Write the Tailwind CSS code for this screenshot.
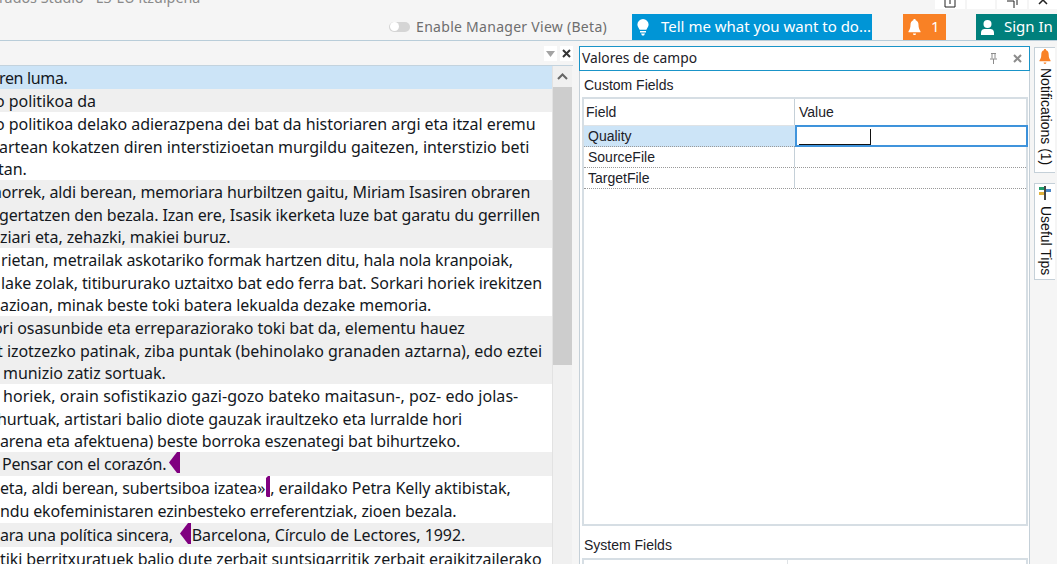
<!DOCTYPE html>
<html lang="en">
<head>
<meta charset="UTF-8">
<title>Trados Studio</title>
<script src="https://cdn.jsdelivr.net/npm/@tailwindcss/browser@4"></script>
</head>
<body class="w-[1057px] h-[564px] overflow-hidden bg-[#f5f5f5] font-['Noto_Sans',sans-serif]">

<!-- title + toolbar -->
<header class="h-[41px] border-b border-[#b9cdd9] overflow-hidden">
  <div class="h-[14px] flex justify-between">
    <div class="-mt-[12px] text-[14.300px] leading-[20px] text-[#8a8a8a] whitespace-nowrap -ml-[1px]">rados Studio - E3-EU itzulpena</div>
    <div class="flex gap-[2px] -mt-[5px] h-[14px]">
      <div class="w-[30px] h-[14px] bg-white flex justify-center items-end"><svg width="12" height="14" viewBox="0 0 12 14"><path d="M1 3h10v9H1zM6 3v6" fill="none" stroke="#222"/></svg></div>
      <div class="w-[28px] h-[14px] bg-white"></div>
      <div class="w-[30px] h-[14px] bg-white flex justify-center"><svg width="12" height="14" viewBox="0 0 12 14"><path d="M3 3h8v7M1 6h7v7" fill="none" stroke="#222"/></svg></div>
      <div class="w-[28px] h-[14px] bg-white flex justify-center"><svg width="10" height="14" viewBox="0 0 10 14"><path d="M1 1l8 8M9 1l-8 8" stroke="#222" stroke-width="1.500"/></svg></div>
    </div>
  </div>
  <div class="h-[26px] flex items-stretch justify-end">
    <div class="flex items-center mr-[25px] -mt-[1px]">
      <div class="w-[21px] h-[10px] rounded-full bg-[#d5d5d5] mr-[6px] flex items-center"><div class="w-[9px] h-[9px] rounded-full bg-white ml-[1px]"></div></div>
      <span class="text-[14px] tracking-[0.28px] text-[#6e6e6e]">Enable Manager View (Beta)</span>
    </div>
    <div class="w-[240px] bg-[#0095d6] text-white flex items-center pl-[5px] mr-[31px]">
      <svg width="12" height="17" viewBox="0 0 12 17" class="mr-[12px]"><path d="M6 0a5.600 5.600 0 0 0-5.600 5.600c0 2.300 1.500 3.400 2.200 5.200h6.800c.7-1.800 2.200-2.900 2.200-5.200A5.600 5.600 0 0 0 6 0zM3 12h6v1.500H3zM4 14.500h4L7 16.500H5z" fill="#fff"/></svg>
      <span class="text-[15px] -mt-[1px] whitespace-nowrap">Tell me what you want to do...</span>
    </div>
    <div class="w-[43px] bg-[#f98125] text-white flex items-center pl-[5px] mr-[30px]">
      <svg width="13" height="16" viewBox="0 0 13 16" class="mr-[10px]"><path d="M6.500 0c.8 0 1.200.5 1.200 1.200 2 .6 2.800 2.400 2.800 4.600 0 3 .8 5 2 6.400v1H.5v-1c1.200-1.400 2-3.400 2-6.400 0-2.200.8-4 2.800-4.600C5.300.5 5.700 0 6.500 0zM5 14.500h3c0 1-.6 1.500-1.500 1.500S5 15.500 5 14.500z" fill="#fff"/></svg>
      <span class="text-[15px] -mt-[1px]">1</span>
    </div>
    <div class="w-[81px] bg-[#00807c] text-white flex items-center pl-[5px]">
      <svg width="13" height="15" viewBox="0 0 13 15" class="mr-[10px]"><circle cx="6.500" cy="4" r="4" fill="#fff"/><path d="M0 15v-2.500C0 10 2 9 3.500 9h6c1.500 0 3.500 1 3.500 3.500V15z" fill="#fff"/></svg>
      <span class="text-[15px] -mt-[1px] whitespace-nowrap">Sign In</span>
    </div>
  </div>
</header>

<main class="flex h-[523px] overflow-hidden">

  <!-- editor pane -->
  <section class="w-[573px] shrink-0 flex flex-col">
    <div class="h-[25px] border-b border-[#c3d3de] flex justify-end items-start gap-[3px] pt-[5px] shrink-0">
      <div class="w-[13px] h-[15px] bg-white flex items-center justify-center"><svg width="9" height="6" viewBox="0 0 9 6"><path d="M0 0h9L4.500 6z" fill="#a3a3a3"/></svg></div>
      <div class="w-[13px] h-[15px] bg-white flex items-center justify-center"><svg width="9" height="9" viewBox="0 0 9 9"><path d="M1 1l7 7M8 1l-7 7" stroke="#333" stroke-width="2"/></svg></div>
    </div>
    <div class="flex flex-1 min-h-0">
      <div class="w-[553px] shrink-0 border-r border-[#e2e2e2] overflow-hidden text-[16px] tracking-[-0.05px] leading-[22.670px] text-[#14181d] whitespace-nowrap [&>div]:pt-[1px]">
        <div class="bg-[#cce4f7] h-[23px]"><div class="-ml-[1px] tracking-[-0.35px]">ren luma.</div></div>
        <div class="bg-[#efefef] h-[23px]"><div class="-ml-[5px]">o politikoa da</div></div>
        <div class="bg-white h-[68px]">
          <div class="-ml-[5px]">o politikoa delako adierazpena dei bat da historiaren argi eta itzal eremu</div>
          <div class="-ml-[1px]">artean kokatzen diren interstizioetan murgildu gaitezen, interstizio beti</div>
          <div class="-ml-[2px]">tan.</div>
        </div>
        <div class="bg-[#efefef] h-[68px]">
          <div class="-ml-[8px] tracking-[-0.13px]">horrek, aldi berean, memoriara hurbiltzen gaitu, Miriam Isasiren obraren</div>
          <div class="-ml-[1px] tracking-[-0.13px]">gertatzen den bezala. Izan ere, Isasik ikerketa luze bat garatu du gerrillen</div>
          <div class="tracking-[-0.1px]">ziari eta, zehazki, makiei buruz.</div>
        </div>
        <div class="bg-white h-[68px]">
          <div class="ml-[1px] tracking-[-0.13px]">rietan, metrailak askotariko formak hartzen ditu, hala nola kranpoiak,</div>
          <div class="ml-[1px] tracking-[-0.1px]">lake zolak, titibururako uztaitxo bat edo ferra bat. Sorkari horiek irekitzen</div>
          <div class="tracking-[-0.09px]">azioan, minak beste toki batera lekualda dezake memoria.</div>
        </div>
        <div class="bg-[#efefef] h-[68px]">
          <div class="-ml-[7px] tracking-[-0.08px]">ori osasunbide eta erreparaziorako toki bat da, elementu hauez</div>
          <div class="-ml-[3px] tracking-[-0.03px]">t izotzezko patinak, ziba puntak (behinolako granaden aztarna), edo eztei</div>
          <div class="ml-[3px]">munizio zatiz sortuak.</div>
        </div>
        <div class="bg-white h-[68px]">
          <div class="ml-[3px] tracking-[0.05px]">horiek, orain sofistikazio gazi-gozo bateko maitasun-, poz- edo jolas-</div>
          <div class="-ml-[3px] tracking-[-0.1px]">hurtuak, artistari balio diote gauzak iraultzeko eta lurralde hori</div>
          <div class="tracking-[-0.13px]">arena eta afektuena) beste borroka eszenategi bat bihurtzeko.</div>
        </div>
        <div class="bg-[#efefef] h-[24px]">
          <div class="ml-[2px] flex items-start"><span class="tracking-[-0.2px]">Pensar con el corazón.</span><svg width="11" height="21" viewBox="0 0 11 21" class="ml-[3px] -mt-[1px] shrink-0"><path d="M11 0v21H8L0 10.500 8 0z" fill="#800080"/></svg></div>
        </div>
        <div class="bg-white h-[47px]">
          <div class="flex items-start"><span class="tracking-[-0.15px]">eta, aldi berean, subertsiboa izatea»</span><svg width="4" height="21" viewBox="0 0 4 21" class="shrink-0 ml-[1px] -mt-[1px]"><path d="M0 2l2-2h2v21H1l-1-1z" fill="#800080"/></svg><span>, eraildako Petra Kelly aktibistak,</span></div>
          <div class="tracking-[-0.15px]">ndu ekofeministaren ezinbesteko erreferentziak, zioen bezala.</div>
        </div>
        <div class="bg-[#efefef] h-[24px]">
          <div class="flex items-start"><span class="whitespace-pre tracking-[-0.2px]">ara una política sincera, </span><svg width="11" height="21" viewBox="0 0 11 21" class="shrink-0 ml-[3px] mr-[1px] -mt-[1px]"><path d="M11 0v21H8L0 10.500 8 0z" fill="#800080"/></svg><span>Barcelona, Círculo de Lectores, 1992.</span></div>
        </div>
        <div class="bg-white h-[24px]"><div class="tracking-[-0.1px]">tiki berritxuratuek balio dute zerbait suntsigarritik zerbait eraikitzailerako</div></div>
      </div>
      <!-- scrollbar -->
      <div class="w-[19px] shrink-0 bg-[#f0f0f0] flex flex-col">
        <div class="h-[21px] flex items-center justify-center"><svg width="11" height="7" viewBox="0 0 11 7"><path d="M1 6l4.500-4.500L10 6" fill="none" stroke="#666" stroke-width="2"/></svg></div>
        <div class="h-[278px] bg-[#cdcdcd]"></div>
      </div>
    </div>
  </section>

  <!-- field values pane -->
  <section class="w-[451px] shrink-0 ml-[6px] mt-[5px] flex flex-col border-r border-[#c5d0d8] font-['Liberation_Sans',sans-serif] text-[14px] text-[#1c2128]">
    <div class="h-[25px] bg-white border border-[#1a94c8] flex items-center justify-between pl-[2px] pr-[6px] shrink-0 -mr-[1px] font-['Noto_Sans',sans-serif] text-[13.800px]">
      <span>Valores de campo</span>
      <div class="flex items-center gap-[15px]">
        <svg width="9" height="11" viewBox="0 0 9 11"><path d="M2 .5h5M3 .5v5M6 .5v5M1 6h7M4.500 6v5" stroke="#8c8c8c" fill="none"/></svg>
        <svg width="9" height="9" viewBox="0 0 9 9" class="mr-[1px]"><path d="M1 1l7 7M8 1l-7 7" stroke="#8c8c8c" stroke-width="2"/></svg>
      </div>
    </div>
    <div class="flex-1 bg-white border-l border-[#c5d0d8] pl-[2px] pr-[1px] flex flex-col min-h-0 overflow-hidden">
      <div class="h-[26px] pl-[2px] flex items-center pt-[3px]">Custom Fields</div>
      <div class="h-[429px] shrink-0 border-2 border-[#c5d0d8]/70">
        <div class="flex h-[27px] border-b border-[#dfe3e6]">
          <div class="w-[211px] border-r border-[#c5d0d8] pl-[2px] flex items-center">Field</div>
          <div class="flex-1 pl-[4px] flex items-center">Value</div>
        </div>
        <div class="flex h-[21px]">
          <div class="w-[211px] bg-[#cce4f7] pl-[4px] flex items-center border-b border-dotted border-[#999]">Quality</div>
          <div class="flex-1 border-2 border-[#2b88d8]/90 -mt-[1px] -mr-[2px] h-[22px] pl-[2px] flex items-end">
            <div class="w-[72px] h-[16px] border-b border-r border-[#111]"></div>
          </div>
        </div>
        <div class="flex h-[21px] border-b border-dotted border-[#999]">
          <div class="w-[211px] border-r border-[#c5d0d8] pl-[4px] flex items-center">SourceFile</div>
        </div>
        <div class="flex h-[21px] border-b border-dotted border-[#999]">
          <div class="w-[211px] border-r border-[#c5d0d8] pl-[4px] flex items-center">TargetFile</div>
        </div>
      </div>
      <div class="h-[32px] pl-[2px] flex items-end pb-[2px] shrink-0">System Fields</div>
      <div class="flex-1 border-2 border-b-0 border-[#c5d0d8]/70">
        <div class="w-[204px] h-full border-r border-[#dfe3e6]"></div>
      </div>
    </div>
  </section>

  <!-- side tabs -->
  <aside class="ml-[4px] mt-[6px] w-[21px] shrink-0 flex flex-col gap-[10px] font-['Liberation_Sans',sans-serif] text-[14px] text-[#111]">
    <div class="h-[126px] bg-white border-y border-l border-[#c5d0d8] flex flex-col items-center">
      <svg width="12" height="15" viewBox="0 0 13 16" class="mt-[1px]"><path d="M6.500 0c.8 0 1.200.5 1.200 1.200 2 .6 2.800 2.400 2.800 4.600 0 3 .8 5 2 6.400v1H.5v-1c1.200-1.400 2-3.400 2-6.400 0-2.200.8-4 2.800-4.600C5.300.5 5.700 0 6.500 0zM5 14.500h3c0 1-.6 1.500-1.500 1.500S5 15.500 5 14.500z" fill="#f98125"/></svg>
      <span class="[writing-mode:vertical-rl] mt-[4px] whitespace-nowrap">Notifications (1)</span>
    </div>
    <div class="h-[97px] bg-white border-y border-l border-[#c5d0d8] flex flex-col items-center pt-[2px]">
      <svg width="15" height="14" viewBox="0 0 15 14"><rect x="1" y="1" width="5" height="3" fill="#1f9d6b"/><rect x="1" y="6" width="5" height="3" fill="#e0b23c"/><rect x="6" y="0" width="2" height="14" fill="#444"/><rect x="8" y="3" width="5" height="3" fill="#4a86c5"/></svg>
      <span class="[writing-mode:vertical-rl] mt-[6px] whitespace-nowrap">Useful Tips</span>
    </div>
  </aside>
</main>
</body>
</html>
